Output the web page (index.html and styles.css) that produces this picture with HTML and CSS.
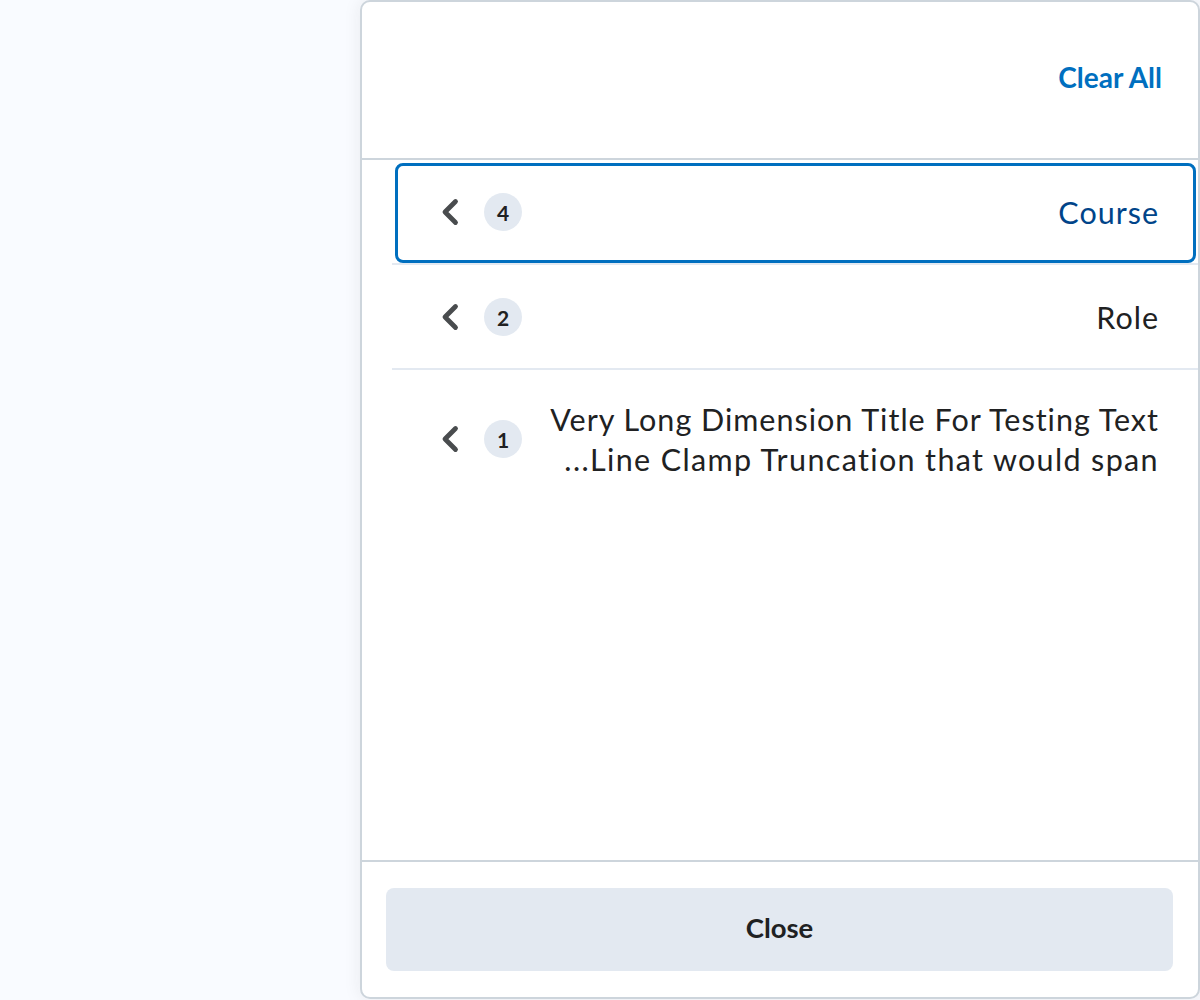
FILE: index.html
```html
<!DOCTYPE html>
<html lang="en">
<head>
<meta charset="utf-8">
<title>Filter dimensions</title>
<link rel="stylesheet" href="styles.css">
</head>
<body>
<div class="panel">
  <div class="panel-header">
    <a class="clear-all" href="#">Clear All</a>
  </div>
  <ul class="dims">
    <li class="dim dim-focused">
      <svg class="chev" width="18" height="28" viewBox="0 0 18 28"><path d="M14.5 3.5 L4 14 L14.5 24.5" fill="none" stroke="#494c4e" stroke-width="4.8" stroke-linecap="round" stroke-linejoin="round"/></svg>
      <span class="badge">4</span>
      <span class="dim-text dim-text-active">Course</span>
    </li>
    <li class="dim">
      <svg class="chev" width="18" height="28" viewBox="0 0 18 28"><path d="M14.5 3.5 L4 14 L14.5 24.5" fill="none" stroke="#494c4e" stroke-width="4.8" stroke-linecap="round" stroke-linejoin="round"/></svg>
      <span class="badge">2</span>
      <span class="dim-text">Role</span>
    </li>
    <li class="dim dim-long">
      <svg class="chev" width="18" height="28" viewBox="0 0 18 28"><path d="M14.5 3.5 L4 14 L14.5 24.5" fill="none" stroke="#494c4e" stroke-width="4.8" stroke-linecap="round" stroke-linejoin="round"/></svg>
      <span class="badge">1</span>
      <span class="dim-text">
        <span class="line">Very Long Dimension Title For Testing Text</span>
        <span class="line line-clamped">...Line Clamp Truncation that would span</span>
      </span>
    </li>
  </ul>
  <div class="panel-footer">
    <button class="close-btn" type="button">Close</button>
  </div>
</div>
</body>
</html>
```

FILE: styles.css
```css
* { box-sizing: border-box; }

html, body {
  margin: 0;
  padding: 0;
  height: 100%;
}

body {
  background: #f9fbff;
  font-family: Lato, "Noto Sans", "Liberation Sans", sans-serif;
  color: #202122;
  overflow: hidden;
}

.panel {
  margin-left: 360px;
  width: 840px;
  height: 999px;
  background: #ffffff;
  border: 2px solid #cdd5dc;
  border-radius: 10px;
  box-shadow: 0 0 18px rgba(32, 33, 34, 0.08);
  display: flex;
  flex-direction: column;
  overflow: hidden;
}

.panel-header {
  height: 158px;
  flex: none;
  border-bottom: 2px solid #cdd5dc;
  display: flex;
  align-items: center;
  justify-content: flex-end;
  padding: 0 36px 6px 0;
}

.clear-all {
  font-size: 28px;
  font-weight: 700;
  color: #006fbf;
  text-decoration: none;
}

.dims {
  list-style: none;
  margin: 0;
  padding: 0 0 0 30px;
  flex: 1;
}

.dim {
  position: relative;
  display: flex;
  align-items: center;
  padding: 32px 39px 31px 49px;
  border-bottom: 2px solid #e3e9f1;
}

.dim-focused::after {
  content: "";
  position: absolute;
  left: 3px;
  right: 2px;
  top: 3px;
  bottom: 0;
  border: 3px solid #006fbf;
  border-radius: 8px;
}

.dim-long {
  padding-top: 29px;
  border-bottom: none;
}

.chev {
  flex: none;
  display: block;
}

.badge {
  flex: none;
  width: 38px;
  height: 38px;
  margin-left: 25px;
  border-radius: 50%;
  background: #e3e9f1;
  color: #202122;
  font-size: 21px;
  font-weight: 700;
  display: flex;
  align-items: center;
  justify-content: center;
}

.dim-text {
  flex: 1;
  text-align: right;
  font-size: 30.5px;
  line-height: 40px;
  letter-spacing: 1px;
  font-variant-ligatures: none;
  color: #202122;
  margin-left: 16px;
}

.dim-text-active {
  color: #004489;
}

.line {
  display: block;
  white-space: nowrap;
}

.line-clamped {
  letter-spacing: 1.35px;
}

.panel-footer {
  flex: none;
  border-top: 2px solid #cdd5dc;
  padding: 26px 25px 26px 24px;
}

.close-btn {
  display: block;
  width: 100%;
  height: 83px;
  padding: 0 0 5px;
  border: none;
  border-radius: 8px;
  background: #e3e9f1;
  color: #202122;
  font-family: Lato, "Noto Sans", "Liberation Sans", sans-serif;
  font-size: 27.5px;
  font-weight: 700;
  cursor: pointer;
}
```
